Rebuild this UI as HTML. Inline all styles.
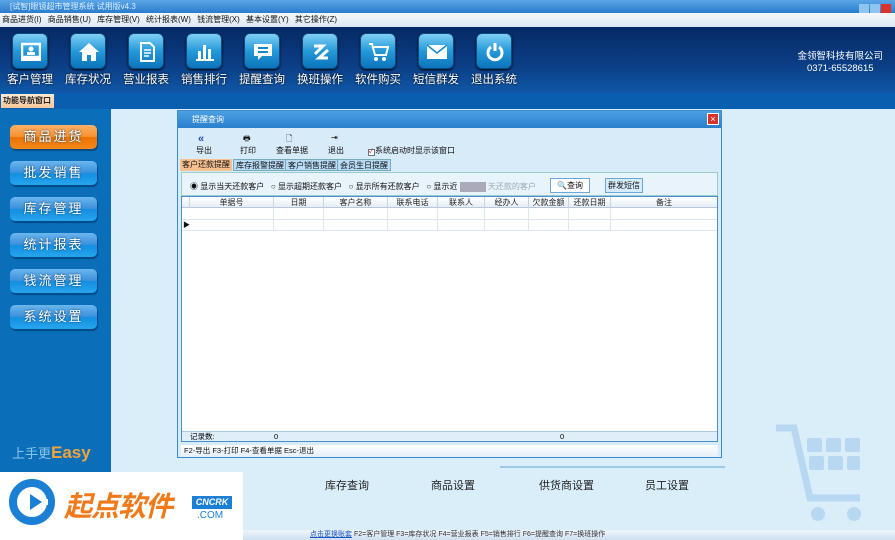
<!DOCTYPE html>
<html><head><meta charset="utf-8"><style>
*{margin:0;padding:0;box-sizing:border-box}
body{width:895px;height:540px;overflow:hidden;position:relative;font-family:"Liberation Sans","Noto Sans CJK SC",sans-serif;background:#daeefa}
.abs{position:absolute}
.title{left:0;top:0;width:895px;height:13px;background:linear-gradient(#5aa6e6,#2b7ccc);font-size:8px;color:#dbeeff;padding-left:10px;line-height:13px}
.menu{left:0;top:13px;width:895px;height:14px;background:linear-gradient(#f4f8fc,#dde8f3);font-size:8px;line-height:14px;color:#111;padding-left:2px;word-spacing:4px}
.tb{left:0;top:27px;width:895px;height:66px;background:linear-gradient(180deg,#062a66 0%,#0b3f86 60%,#1058a8 100%);}
.ic{position:absolute;top:6px;width:36px;height:36px;border-radius:6px;background:linear-gradient(#7fd0f5,#2599d8 50%,#0c74bb);border:1px solid #0a4c86;box-shadow:0 1px 2px #000}
.ic svg{position:absolute;left:8px;top:8px}
.lbl{position:absolute;top:44px;color:#fff;font-size:11.5px;width:70px;text-align:center;text-shadow:0 0 2px #000}
.nav{left:0;top:93px;width:895px;height:16px;background:#0a5eb0}
.navtab{left:1px;top:94px;width:53px;height:14px;background:linear-gradient(#ffe9d4,#f4c79a);font-size:8px;font-weight:bold;line-height:14px;padding-left:2px;color:#222}
.left{left:0;top:109px;width:111px;height:431px;background:#0a6fb8}
.btn{position:absolute;left:10px;width:87px;height:24px;border-radius:5px;background:linear-gradient(#6bb6ee,#3c91dc 48%,#148ee0 52%,#27a6ee);color:#fff;font-size:13px;text-align:center;line-height:24px;letter-spacing:2px;box-shadow:1px 2px 1px #054a86;text-shadow:0 0 2px #035}
.btn.o{background:linear-gradient(#fbb06a,#f7922e 48%,#ec7105 52%,#f58a18)}
.dlg{left:177px;top:110px;width:545px;height:348px;background:#d8ebf9;border:1px solid #3a8bd0}
.dt{height:17px;background:linear-gradient(#4aa0e2,#2a7fcc);color:#fff;font-size:8px;line-height:17px;padding-left:14px}
.x{position:absolute;right:2px;top:2px;width:12px;height:12px;background:#d9332b;border:1px solid #fff;color:#fff;font-size:9px;line-height:10px;text-align:center}
.t{position:absolute;font-size:8px;color:#111}
.grid{position:absolute;left:3px;top:85px;width:537px;height:246px;background:#fff;border:1px solid #4a90d0}
.hd{position:absolute;left:0;top:0;width:100%;height:11px;background:linear-gradient(#fff,#e6eef6);border-bottom:1px solid #b8c8d8}
.col{position:absolute;top:0;height:11px;font-size:8px;line-height:11px;text-align:center;border-right:1px solid #c8d4e0;color:#222}
.vl{position:absolute;top:11px;height:22px;border-right:1px solid #dde6ee}
.bot{position:absolute;font-size:11px;color:#222;top:477px}
</style></head><body>
<div class="abs title">[试智]眼镜超市管理系统 试用版v4.3</div>
<div class="abs" style="right:2px;top:1px;width:34px;height:11px;"><span style="display:inline-block;width:10px;height:10px;background:#8ec5ee;margin-right:1px"></span><span style="display:inline-block;width:10px;height:10px;background:#8ec5ee;margin-right:1px"></span><span style="display:inline-block;width:10px;height:10px;background:#d9332b"></span></div>
<div class="abs menu">商品进货(I) 商品销售(U) 库存管理(V) 统计报表(W) 钱流管理(X) 基本设置(Y) 其它操作(Z)</div>
<div class="abs tb">
<div class="ic" style="left:12px"><svg width="20" height="20"><rect x="1" y="2" width="18" height="13" fill="none" stroke="#fff" stroke-width="2.5"/><circle cx="10" cy="7" r="2.5" fill="#fff"/><rect x="6" y="10" width="8" height="3" fill="#fff"/><rect x="0" y="16" width="20" height="3" fill="#fff"/></svg></div><div class="lbl" style="left:-5px">客户管理</div>
<div class="ic" style="left:70px"><svg width="20" height="20"><path d="M10 1L0 10h3v9h5v-6h4v6h5v-9h3z" fill="#fff"/></svg></div><div class="lbl" style="left:53px">库存状况</div>
<div class="ic" style="left:128px"><svg width="20" height="20"><path d="M4 1h9l4 4v14H4z" fill="none" stroke="#fff" stroke-width="2"/><path d="M7 8h7M7 11h7M7 14h5" stroke="#fff" stroke-width="1.5"/></svg></div><div class="lbl" style="left:111px">营业报表</div>
<div class="ic" style="left:186px"><svg width="20" height="20"><rect x="3" y="9" width="3" height="8" fill="#fff"/><rect x="8" y="3" width="3" height="14" fill="#fff"/><rect x="13" y="7" width="3" height="10" fill="#fff"/><rect x="1" y="17" width="18" height="2" fill="#fff"/></svg></div><div class="lbl" style="left:169px">销售排行</div>
<div class="ic" style="left:244px"><svg width="20" height="20"><path d="M1 2h18v12H9l-4 4v-4H1z" fill="#fff"/><path d="M5 6h10M5 10h10" stroke="#1587cc" stroke-width="2"/></svg></div><div class="lbl" style="left:227px">提醒查询</div>
<div class="ic" style="left:302px"><svg width="20" height="20"><path d="M3 4h9l-8 8M17 8l-9 8h9" fill="none" stroke="#fff" stroke-width="3"/></svg></div><div class="lbl" style="left:285px">换班操作</div>
<div class="ic" style="left:360px"><svg width="20" height="20"><path d="M0 2h3l3 11h11l2-8H5" fill="none" stroke="#fff" stroke-width="2"/><circle cx="7" cy="17" r="2" fill="#fff"/><circle cx="15" cy="17" r="2" fill="#fff"/></svg></div><div class="lbl" style="left:343px">软件购买</div>
<div class="ic" style="left:418px"><svg width="20" height="20"><rect x="0" y="3" width="20" height="14" fill="#fff"/><path d="M0 3l10 8 10-8" fill="none" stroke="#1587cc" stroke-width="1.5"/></svg></div><div class="lbl" style="left:401px">短信群发</div>
<div class="ic" style="left:476px"><svg width="20" height="20"><path d="M6 5A7 7 0 1 0 14 5" fill="none" stroke="#fff" stroke-width="3"/><path d="M10 1v8" stroke="#fff" stroke-width="3"/></svg></div><div class="lbl" style="left:459px">退出系统</div>
<div style="position:absolute;right:12px;top:24px;color:#fff;font-size:9.5px;text-align:center;line-height:12px">金领智科技有限公司<br>0371-65528615</div>
</div>
<div class="abs nav"></div>
<div class="abs navtab">功能导航窗口</div>
<div class="abs left">
<div class="btn o" style="top:16px">商品进货</div>
<div class="btn" style="top:52px">批发销售</div>
<div class="btn" style="top:88px">库存管理</div>
<div class="btn" style="top:124px">统计报表</div>
<div class="btn" style="top:160px">钱流管理</div>
<div class="btn" style="top:196px">系统设置</div>
<div style="position:absolute;left:12px;top:334px;color:#8cc4ee;font-size:13px">上手更<b style="color:#f3a33a;font-size:17px">Easy</b></div>
</div>
<div class="abs" style="left:500px;top:466px;width:225px;height:2px;background:#9cc8ec"></div>
<div class="abs dlg">
<div class="dt">提醒查询<div class="x">×</div></div>
<div class="t" style="left:20px;top:22px;color:#1f4fa8;font-weight:bold;font-size:11px">«</div><div class="t" style="left:18px;top:34px">导出</div>
<div class="t" style="left:65px;top:22px">🖶</div><div class="t" style="left:62px;top:34px">打印</div>
<div class="t" style="left:108px;top:22px">🗋</div><div class="t" style="left:98px;top:34px">查看单据</div>
<div class="t" style="left:153px;top:22px">⇥</div><div class="t" style="left:150px;top:34px">退出</div>
<div class="t" style="left:190px;top:34px"><span style="display:inline-block;width:7px;height:7px;border:1px solid #777;background:#fff;color:#c00;font-size:6px;line-height:5px">✓</span>系统启动时显示该窗口</div>
<div class="t" style="left:2px;top:48px;height:12px;line-height:12px;background:#f6c090;padding:0 2px">客户还款提醒</div>
<div class="t" style="left:55px;top:48px;height:12px;line-height:12px;background:#b8dcf6;padding:0 2px;border:1px solid #7ab">库存报警提醒</div>
<div class="t" style="left:107px;top:48px;height:12px;line-height:12px;background:#b8dcf6;padding:0 2px;border:1px solid #7ab">客户销售提醒</div>
<div class="t" style="left:159px;top:48px;height:12px;line-height:12px;background:#b8dcf6;padding:0 2px;border:1px solid #7ab">会员生日提醒</div>
<div style="position:absolute;left:3px;top:61px;width:537px;height:24px;background:#e8f3fb;border:1px solid #9cc"></div>
<div class="t" style="left:12px;top:70px">◉ 显示当天还款客户 &nbsp; ○ 显示超期还款客户 &nbsp; ○ 显示所有还款客户 &nbsp; ○ 显示近 <span style="display:inline-block;width:26px;height:10px;background:#aab;vertical-align:middle"></span> <span style="color:#9ab">天还款的客户</span></div>
<div class="t" style="left:372px;top:67px;width:40px;height:15px;background:#fff;border:1px solid #6aa8d8;text-align:center;line-height:13px">🔍查询</div>
<div class="t" style="left:427px;top:67px;width:38px;height:15px;background:#d6ecfb;border:1px solid #6aa8d8;text-align:center;line-height:13px">群发短信</div>
<div class="grid">
<div class="hd"></div>
<div class="col" style="left:0;width:8px"></div>
<div class="col" style="left:8px;width:84px">单据号</div>
<div class="col" style="left:92px;width:50px">日期</div>
<div class="col" style="left:142px;width:64px">客户名称</div>
<div class="col" style="left:206px;width:50px">联系电话</div>
<div class="col" style="left:256px;width:47px">联系人</div>
<div class="col" style="left:303px;width:44px">经办人</div>
<div class="col" style="left:347px;width:40px">欠款金额</div>
<div class="col" style="left:387px;width:42px">还款日期</div>
<div class="col" style="left:429px;width:106px;border:0">备注</div>
<div style="position:absolute;left:0;top:22px;width:100%;border-top:1px solid #dde6ee"></div>
<div style="position:absolute;left:0;top:33px;width:100%;border-top:1px solid #dde6ee"></div>
<div class="t" style="left:1px;top:23px;font-size:7px">▶</div>
<div class="vl" style="left:91px"></div><div class="vl" style="left:141px"></div><div class="vl" style="left:205px"></div><div class="vl" style="left:255px"></div><div class="vl" style="left:302px"></div><div class="vl" style="left:346px"></div><div class="vl" style="left:386px"></div><div class="vl" style="left:428px"></div>
<div style="position:absolute;left:0;bottom:0;width:100%;height:10px;background:#e0eefa;border-top:1px solid #a8c8e8;font-size:7.5px;line-height:10px"><span style="position:absolute;left:8px">记录数:</span><span style="position:absolute;left:92px">0</span><span style="position:absolute;left:378px">0</span></div>
</div>
<div class="t" style="left:3px;top:334px;width:537px;height:12px;line-height:12px;background:linear-gradient(#fff,#e4eef8);padding-left:3px;font-size:7.5px">F2-导出 F3-打印 F4-查看单据 Esc-退出</div>
</div>
<div class="bot" style="left:325px">库存查询</div>
<div class="bot" style="left:431px">商品设置</div>
<div class="bot" style="left:539px">供货商设置</div>
<div class="bot" style="left:645px">员工设置</div>
<svg class="abs" style="left:772px;top:424px" width="100" height="116"><path d="M4 4h18l16 70h50" fill="none" stroke="#b8d8f2" stroke-width="7"/><g fill="#b8d8f2"><rect x="35" y="14" width="15" height="14" rx="2"/><rect x="54" y="14" width="15" height="14" rx="2"/><rect x="73" y="14" width="15" height="14" rx="2"/><rect x="37" y="32" width="15" height="14" rx="2"/><rect x="56" y="32" width="15" height="14" rx="2"/><rect x="75" y="32" width="13" height="14" rx="2"/><circle cx="46" cy="90" r="7"/><circle cx="82" cy="90" r="7"/></g></svg>
<div class="abs" style="left:0;top:530px;width:895px;height:10px;background:linear-gradient(#eef5fb,#cfe0f0);font-size:7px;line-height:10px;padding-left:310px;color:#333"><span style="color:#1a55c0;text-decoration:underline">点击更换账套</span> F2=客户管理 F3=库存状况 F4=营业报表 F5=销售排行 F6=提醒查询 F7=换班操作</div>
<div class="abs" style="left:0;top:472px;width:243px;height:68px;background:#fff">
<svg style="position:absolute;left:8px;top:7px" width="48" height="46"><circle cx="24" cy="23" r="19" fill="none" stroke="#1b7fd4" stroke-width="8"/><path d="M24 23l16 0" stroke="#fff" stroke-width="6"/><path d="M22 15l12 8-12 8z" fill="#1b7fd4"/></svg>
<div style="position:absolute;left:64px;top:13px;font-size:28px;font-weight:bold;color:#f07a1a;font-style:italic;letter-spacing:-1px">起点软件</div>
<div style="position:absolute;left:192px;top:24px;width:40px;height:13px;background:#1b7fd4;color:#fff;font-size:9px;font-weight:bold;font-style:italic;text-align:center;line-height:13px">CNCRK</div>
<div style="position:absolute;left:197px;top:38px;font-size:10px;color:#1b7fd4">.COM</div>
</div>
</body></html>
